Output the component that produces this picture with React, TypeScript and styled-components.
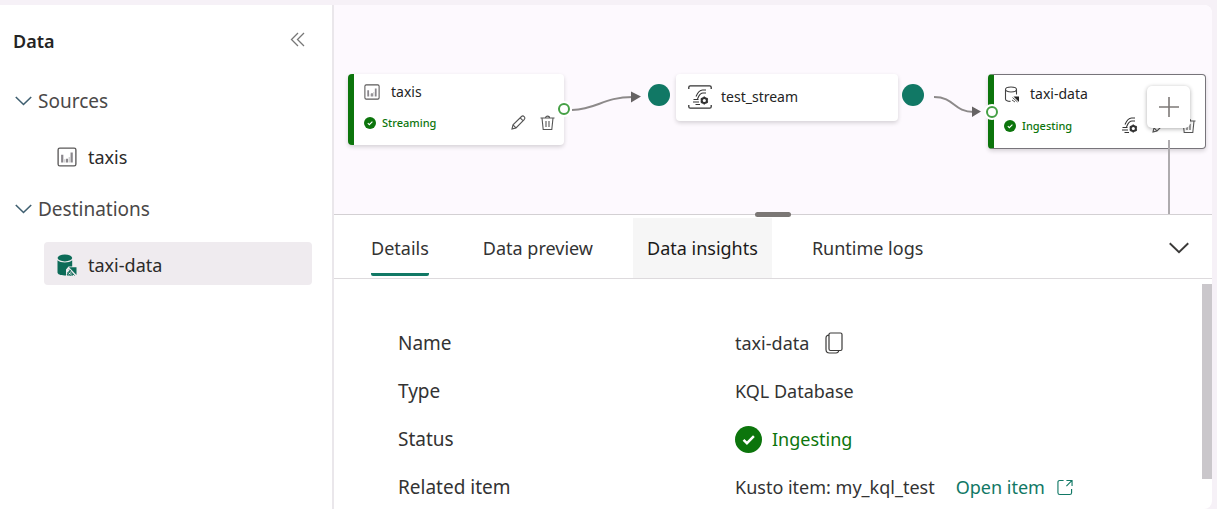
import React from 'react';
import styled, { createGlobalStyle } from 'styled-components';

const GlobalStyle = createGlobalStyle`
  * { box-sizing: border-box; }
  body {
    margin: 0;
    background: #f6f1f7;
    color: #2b2a29;
    font-family: 'Noto Sans', 'Open Sans', sans-serif;
    font-size: 18px;
    line-height: 24px;
  }
  button {
    font: inherit;
    color: inherit;
    border: 0;
    padding: 0;
    background: none;
    cursor: pointer;
  }
  svg { display: block; flex: none; }
`;

const green = '#0c750c';
const teal = '#117865';

const Shell = styled.div`
  display: flex;
  height: 100vh;
  padding: 5px 5px 0 0;
`;

const Sidebar = styled.aside`
  flex: none;
  width: 334px;
  background: #fff;
  border-right: 2px solid #eae7eb;
`;

const SidebarHeader = styled.header`
  display: flex;
  align-items: center;
  justify-content: space-between;
  height: 64px;
  padding: 8px 27px 0 13px;
`;

const SidebarTitle = styled.h2`
  margin: 0;
  font-size: 18px;
  font-weight: 600;
  color: #242424;
`;

const SectionToggle = styled.button`
  display: flex;
  align-items: center;
  gap: 6px;
  width: 100%;
  height: 65px;
  padding: 0 0 1px 15px;
  font-size: 19px;
  color: #4a4848;
`;

const TreeItem = styled.button<{ $selected?: boolean }>`
  display: flex;
  align-items: center;
  gap: 11px;
  width: calc(100% - 64px);
  height: 43px;
  margin-left: 44px;
  padding: 2px 0 0 13px;
  border-radius: 4px;
  background: ${(p) => (p.$selected ? '#efebef' : 'transparent')};
`;

const Main = styled.main`
  display: flex;
  flex-direction: column;
  flex: 1;
  min-width: 0;
  overflow: hidden;
  background: #fff;
  border-radius: 0 8px 8px 0;
`;

const Canvas = styled.section`
  position: relative;
  flex: none;
  height: 209px;
  overflow: hidden;
  background: #fdf9fe;
`;

const EdgeLayer = styled.svg`
  position: absolute;
  inset: 0;
  width: 100%;
  height: 100%;
`;

const Node = styled.article<{ $x: number; $w: number; $h: number; $stripe?: boolean; $outlined?: boolean }>`
  position: absolute;
  left: ${(p) => p.$x}px;
  top: 69px;
  display: flex;
  flex-direction: column;
  width: ${(p) => p.$w}px;
  height: ${(p) => p.$h}px;
  padding: 7px 9px 0 ${(p) => (p.$stripe ? 10 : 12)}px;
  background: #fff;
  border: ${(p) => (p.$outlined ? '1px solid #77747a' : '0')};
  border-left: ${(p) => (p.$stripe ? `6px solid ${green}` : '0')};
  border-radius: 4px;
  box-shadow: 0 2px 4px rgba(0, 0, 0, 0.16);
`;

const NodeTitle = styled.div<{ $gap: number; $h: number }>`
  display: flex;
  align-items: center;
  gap: ${(p) => p.$gap}px;
  height: ${(p) => p.$h}px;
  font-size: 14px;
  line-height: 20px;
  color: #242424;
`;

const NodeFooter = styled.div`
  display: flex;
  align-items: center;
  justify-content: space-between;
  height: 42px;
  padding-bottom: 3px;
`;

const NodeStatus = styled.span`
  display: flex;
  align-items: center;
  gap: 6px;
  font-size: 11px;
  line-height: 16px;
  font-weight: 500;
  color: ${green};
`;

const NodeActions = styled.div`
  display: flex;
  align-items: center;
  gap: 14px;
`;

const Port = styled.span<{ $x: number; $y: number }>`
  position: absolute;
  left: ${(p) => p.$x - 6}px;
  top: ${(p) => p.$y - 6}px;
  width: 12px;
  height: 12px;
  border: 2px solid #45a045;
  border-radius: 50%;
  background: #fff;
  box-shadow: 0 0 0 2px #fff;
`;

const StreamDot = styled.span<{ $x: number }>`
  position: absolute;
  left: ${(p) => p.$x - 11}px;
  top: 79px;
  width: 22px;
  height: 22px;
  border-radius: 50%;
  background: ${teal};
`;

const AddButton = styled.button`
  position: absolute;
  left: 813px;
  top: 81px;
  display: grid;
  place-items: center;
  width: 43px;
  height: 42px;
  background: #fff;
  border-radius: 5px;
  box-shadow: 0 1px 4px rgba(0, 0, 0, 0.32);
`;

const Panel = styled.section`
  position: relative;
  display: flex;
  flex-direction: column;
  flex: 1;
  min-height: 0;
  border-top: 1px solid #d3d0d3;
`;

const ResizeHandle = styled.div`
  position: absolute;
  top: -3px;
  left: 50%;
  width: 36px;
  height: 5px;
  margin-left: -18px;
  border-radius: 3px;
  background: #7b7775;
`;

const TabBar = styled.div`
  display: flex;
  align-items: center;
  justify-content: space-between;
  flex: none;
  padding: 3px 22px 0 23px;
  border-bottom: 1px solid #dddadd;
`;

const TabList = styled.div`
  display: flex;
  gap: 26px;
`;

const Tab = styled.button<{ $active?: boolean; $hovered?: boolean }>`
  display: flex;
  height: 60px;
  padding: 0 14px;
  background: ${(p) => (p.$hovered ? '#f6f6f6' : 'transparent')};
  color: ${(p) => (p.$hovered ? '#1b1a19' : '#333')};

  span {
    display: flex;
    align-items: center;
    height: 58px;
    padding-top: 5px;
    border-bottom: 3px solid ${(p) => (p.$active ? teal : 'transparent')};
    border-radius: 2px;
  }
`;

const PanelBody = styled.div`
  display: flex;
  flex: 1;
  min-height: 0;
  overflow: hidden;
`;

const Details = styled.dl`
  display: grid;
  grid-template-columns: 337px 1fr;
  grid-auto-rows: 48px;
  align-items: center;
  flex: 1;
  margin: 0;
  padding: 40px 0 0 64px;
  font-size: 19px;
  color: #333;

  dd {
    display: flex;
    align-items: center;
    margin: 0;
    font-size: 18px;
    white-space: nowrap;
  }
`;

const CopyButton = styled.button`
  margin-left: 16px;
`;

const StatusText = styled.span`
  display: flex;
  align-items: center;
  gap: 10px;
  color: ${green};
`;

const OpenLink = styled.a`
  display: flex;
  align-items: center;
  gap: 12px;
  margin-left: 21px;
  color: ${teal};
  text-decoration: none;
`;

const ScrollThumb = styled.div`
  flex: none;
  width: 10px;
  height: 195px;
  margin-top: 5px;
  background: #cac7cb;
`;

const ChevronIcon = ({ w = 17, h = 10, color = '#3f5f70' }) => (
  <svg width={w} height={h} viewBox="0 0 17 10" fill="none" stroke={color} strokeWidth="1.6">
    <path d="M.8 1 8.5 8.5 16.2 1" />
  </svg>
);

const ChartIcon = ({ size = 18 }) => (
  <svg width={size} height={size} viewBox="0 0 18 18" fill="none" stroke="#5a5858">
    <rect x="1" y="1" width="16" height="16" rx="1.5" strokeWidth="1.2" />
    <path d="M4.7 7v7M9 10.5V14M13.2 5v9" stroke="#8a878c" strokeWidth="2" />
    <path d="M7 11v3M11 9v5" stroke="#bbb" strokeWidth=".8" />
  </svg>
);

const DatabaseFilledIcon = () => (
  <svg width="20" height="22" viewBox="0 0 20 22">
    <path d="M.5 6.2c1.6 1.600 4.500 2.200 7.300 2.200s5.900-.6 7.400-2.200V12.500H11.500l-2.500 3v5.900c-4.800.3-8.500-.8-8.500-3.100z" fill="#0c6b58" />
    <ellipse cx="7.900" cy="3.900" rx="7.300" ry="3.500" fill="#0c6b58" />
    <path d="M12 13.300H19.500V21z" fill="#0c6b58" />
    <path d="m12 15.500 5.500 6M10 18.500l3.500 3M13.500 16l-3.500 5h6l-4.500-3.500" stroke="#0c6b58" strokeWidth="1" fill="none" />
  </svg>
);

const DatabaseIcon = () => (
  <svg width="16" height="17" viewBox="0 0 16 17" fill="none" stroke="#444" strokeWidth="1.100">
    <ellipse cx="7" cy="3.500" rx="5.500" ry="2.500" />
    <path d="M1.500 3.500V13c0 1.300 2.300 2.300 5 2.400M12.500 3.500v5" />
    <path d="M9.500 10.500h5.500v5.500z" fill="#242424" stroke="none" />
    <path d="m8.500 11.500 5 4.500M8 14l3 2" strokeWidth=".9" />
  </svg>
);

const CheckIcon = ({ size = 12 }) => (
  <svg width={size} height={size} viewBox="0 0 26 26">
    <circle cx="13" cy="13" r="13" fill={green} />
    <path d="m8.200 13.300 3.300 3.200 6.700-6.700" fill="none" stroke="#fff" strokeWidth="2.400" />
  </svg>
);

const PencilIcon = () => (
  <svg width="15" height="15" viewBox="0 0 15 15" fill="none" stroke="#555" strokeWidth="1.100">
    <path d="m1 14 1-4.200L10.500 1.500c1.800-1.500 4.300.7 2.900 2.800L5 12.900zM9.200 2.800l3 3M2 9.800l3 3" />
  </svg>
);

const TrashIcon = () => (
  <svg width="15" height="16" viewBox="0 0 15 16" fill="none" stroke="#555" strokeWidth="1.100">
    <path d="M.5 3h14M5.500 3c0-2.500 4-2.500 4 0M2 3l1.200 11.500h8.600L13 3M6 6v6M9 6v6" />
  </svg>
);

const flowPaths = (
  <>
    <path d="M4 7.500C5.500 4 7 1 10.500 1H14M5.500 10C7 7 7.500 4 11 4h3M1.500 10.500h5M1 13h6M3.500 15.500H8" strokeWidth="1.100" />
    <circle cx="12.300" cy="11.500" r="2.600" strokeWidth="2" />
    <path d="M12.300 7.500v1.500M12.300 14v1.500M8.800 9.500l1.300.8M14.500 12.700l1.300.8M8.800 13.500l1.300-.8M14.500 10.300l1.300-.8" strokeWidth="1.500" />
  </>
);

const FlowIcon = () => (
  <svg width="17" height="17" viewBox="0 0 17 17" fill="none" stroke="#333">
    {flowPaths}
  </svg>
);

const StreamIcon = () => (
  <svg width="24" height="24" viewBox="0 0 24 24" fill="none" stroke="#333">
    <path d="M.8 4V2.300C.8 1.300 1.300.8 2.300.8h19.400c1 0 1.500.5 1.500 1.500V4M.8 20v1.700c0 1 .5 1.500 1.500 1.500h19.400c1 0 1.500-.5 1.500-1.500V20" strokeWidth="1.300" />
    <g transform="translate(4 4)">{flowPaths}</g>
  </svg>
);

const CopyIcon = () => (
  <svg width="18" height="22" viewBox="0 0 18 22" fill="none" stroke="#3b3a39" strokeWidth="1.200">
    <rect x="4" y="1" width="13" height="17.500" rx="1.500" />
    <path d="M4 3.200C2 3.200 1 4.200 1 6v11.500C1 20 2.200 21 4.500 21H11c1.500 0 2.500-.8 2.800-2.500" />
  </svg>
);

const OpenIcon = () => (
  <svg width="16" height="17" viewBox="0 0 17 17" fill="none" stroke={teal} strokeWidth="1.200">
    <path d="M7 1H3C1.700 1 1 1.700 1 3v11c0 1.300.7 2 2 2h10.500c1.300 0 2-.7 2-2v-4M10 1h6v6M16 1l-6 6" />
  </svg>
);

export default function App() {
  return (
    <>
      <GlobalStyle />
      <Shell>
        <Sidebar>
          <SidebarHeader>
            <SidebarTitle>Data</SidebarTitle>
            <button aria-label="Collapse data pane">
              <svg width="15" height="18" viewBox="0 0 15 18" fill="none" stroke="#777" strokeWidth="1.300">
                <path d="M8 1 1.500 7.500 8 14M14 1 7.500 7.500 14 14" />
              </svg>
            </button>
          </SidebarHeader>
          <SectionToggle aria-expanded="true"><ChevronIcon />Sources</SectionToggle>
          <TreeItem><ChartIcon size={20} />taxis</TreeItem>
          <SectionToggle aria-expanded="true"><ChevronIcon />Destinations</SectionToggle>
          <TreeItem $selected><DatabaseFilledIcon />taxi-data</TreeItem>
        </Sidebar>
        <Main>
          <Canvas>
            <Node $x={14} $w={216} $h={71} $stripe>
              <NodeTitle $gap={11} $h={22}><ChartIcon size={16} />taxis</NodeTitle>
              <NodeFooter>
                <NodeStatus><CheckIcon />Streaming</NodeStatus>
                <NodeActions>
                  <button aria-label="Edit"><PencilIcon /></button>
                  <button aria-label="Delete"><TrashIcon /></button>
                </NodeActions>
              </NodeFooter>
            </Node>
            <Node $x={342} $w={222} $h={47}>
              <NodeTitle $gap={9} $h={32}><StreamIcon />test_stream</NodeTitle>
            </Node>
            <Node $x={654} $w={218} $h={75} $stripe $outlined>
              <NodeTitle $gap={10} $h={24}><DatabaseIcon />taxi-data</NodeTitle>
              <NodeFooter>
                <NodeStatus><CheckIcon />Ingesting</NodeStatus>
                <NodeActions>
                  <button aria-label="Open stream"><FlowIcon /></button>
                  <button aria-label="Edit"><PencilIcon /></button>
                  <button aria-label="Delete"><TrashIcon /></button>
                </NodeActions>
              </NodeFooter>
            </Node>
            <EdgeLayer aria-hidden="true" pointerEvents="none">
              <g fill="none" stroke="#8d8a8a" strokeWidth="2">
                <path d="M238 105C264 104 269 92 299 92" />
                <path d="M600 92C621 92 619 107 640 107" />
                <path d="M835 135V209" stroke="#aeabae" />
              </g>
              <path d="M297 86.500 307 91.500 297 97.500zM638 101.500 647 106.500 638 112z" fill="#666364" />
            </EdgeLayer>
            <Port $x={230} $y={104} />
            <StreamDot $x={325} />
            <StreamDot $x={579} />
            <Port $x={658} $y={107} />
            <AddButton aria-label="Add destination">
              <svg width="20" height="20" viewBox="0 0 20 20" stroke="#7d7977" strokeWidth="1.600">
                <path d="M10 0v20M0 10h20" />
              </svg>
            </AddButton>
          </Canvas>
          <Panel>
            <ResizeHandle />
            <TabBar>
              <TabList role="tablist">
                <Tab role="tab" aria-selected="true" $active><span>Details</span></Tab>
                <Tab role="tab" aria-selected="false"><span>Data preview</span></Tab>
                <Tab role="tab" aria-selected="false" $hovered><span>Data insights</span></Tab>
                <Tab role="tab" aria-selected="false"><span>Runtime logs</span></Tab>
              </TabList>
              <button aria-label="Collapse panel"><ChevronIcon w={22} h={12} color="#3b3a39" /></button>
            </TabBar>
            <PanelBody>
              <Details>
                <dt>Name</dt>
                <dd>taxi-data<CopyButton aria-label="Copy name"><CopyIcon /></CopyButton></dd>
                <dt>Type</dt>
                <dd>KQL Database</dd>
                <dt>Status</dt>
                <dd><StatusText><CheckIcon size={27} />Ingesting</StatusText></dd>
                <dt>Related item</dt>
                <dd>Kusto item: my_kql_test<OpenLink href="#open">Open item<OpenIcon /></OpenLink></dd>
              </Details>
              <ScrollThumb />
            </PanelBody>
          </Panel>
        </Main>
      </Shell>
    </>
  );
}
